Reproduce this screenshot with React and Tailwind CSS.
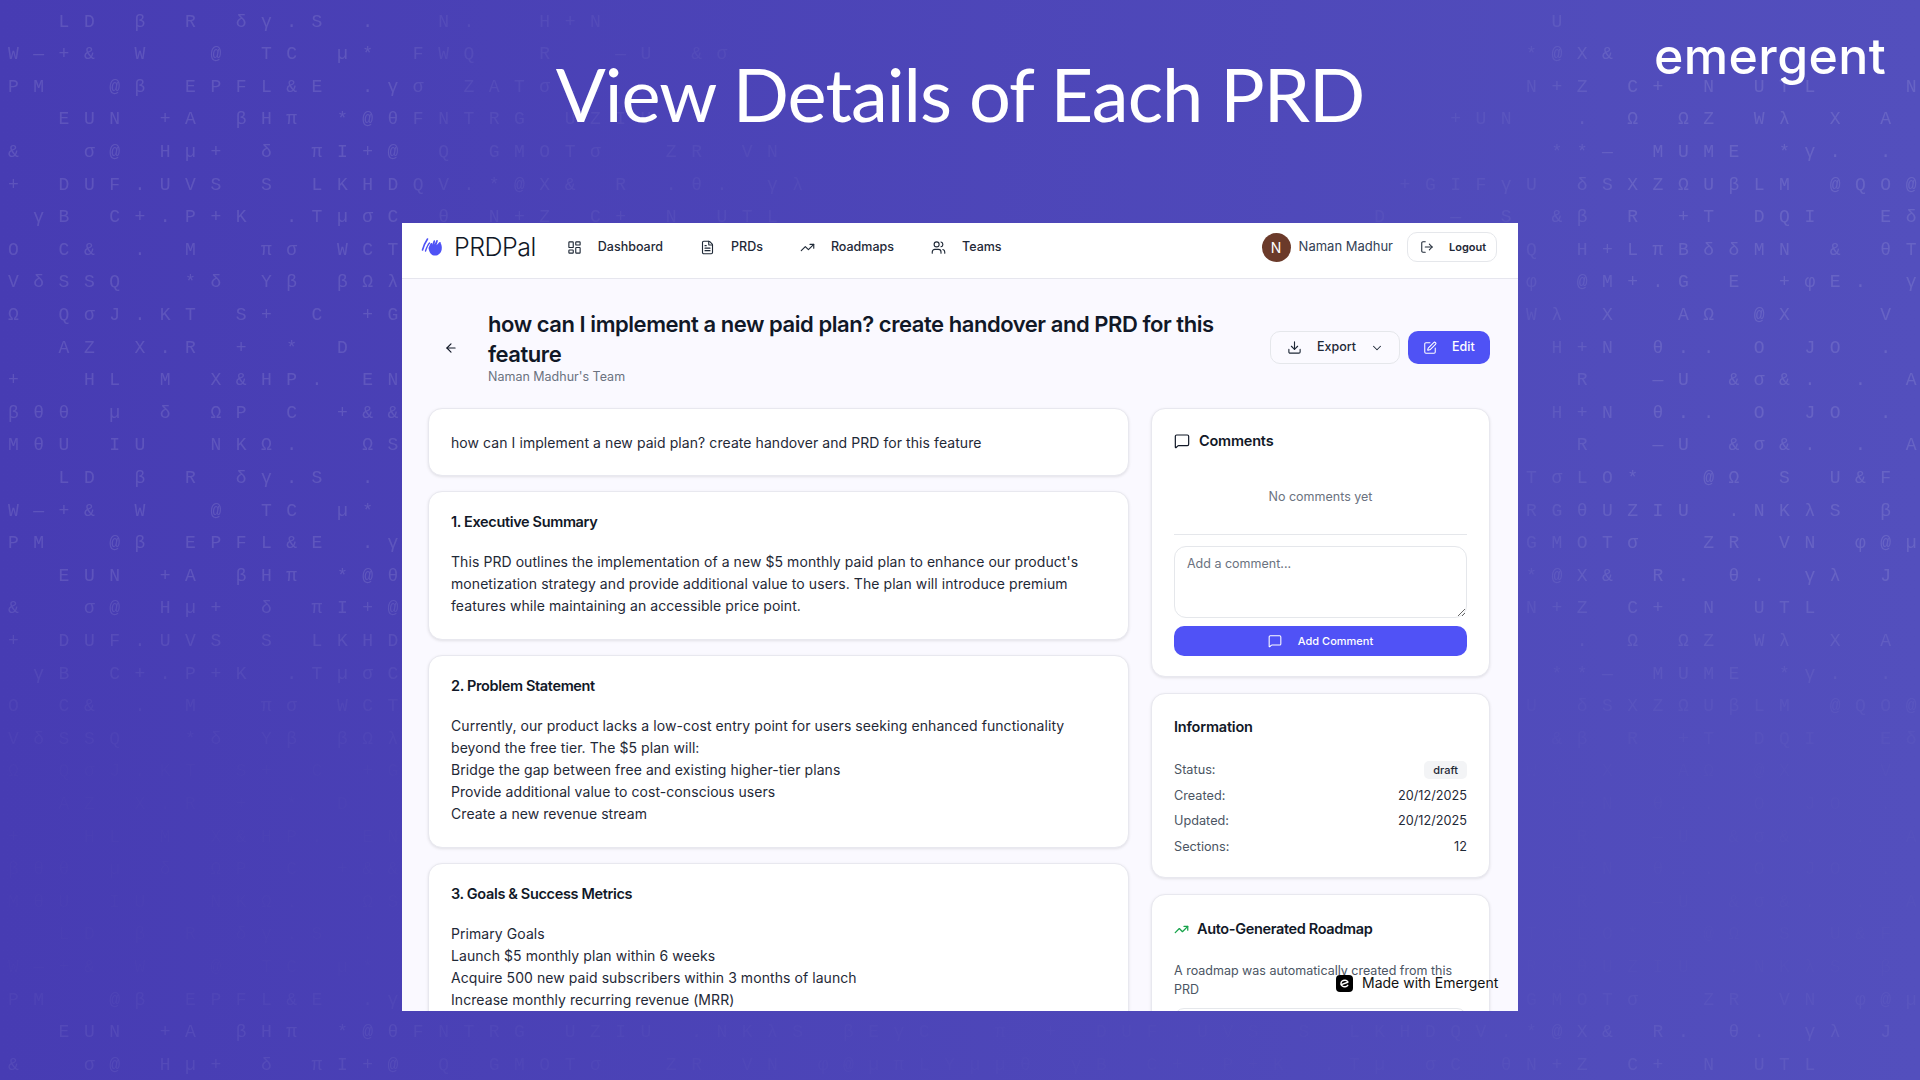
import React from 'react';
import {
  LayoutDashboard,
  FileText,
  TrendingUp,
  Users,
  LogOut,
  ArrowLeft,
  Download,
  ChevronDown,
  SquarePen,
  MessageSquare,
} from 'lucide-react';

// left part of each background row, up to col 60, and the right part from col 60 on
const L = [
  '  LD β R δγ.S .  N.  H+N',
  'W—+& W  @ TC µ* FWQ  R  —U &σ',
  'PM  @β EPFL&E .γσ ZATσLO',
  '  EUN +A βHπ *@θFNTRG UZIU',
  '&  σ@ Hµ+ δ πI+@ Q GMOTσ  ZR VN',
  '+ DUF.UVS S LKHDQV.*@X& R .θ. γλ',
  ' γB C+.P+K .TµσC θ N+Z C+ N UTL',
  'O C& . M  πσ WCT',
  'VδSSQ  *δ Yβ βΩλ',
  'Ω QσJ.KT S+ C +G',
  '  AZ X.R + * D',
  '+  HL M X&HP. ENN',
  'βθθ µ δ ΩP C +&&',
  'MθU IU  NKΩ.  ΩS',
];
const R = [
  ' U',
  '*@X&',
  'N+Z C+ N UTL   N',
  '  . Ω ΩZ Wλ X A',
  ' **— MUME *γ. . .',
  'U δSXZΩUβLM @QO@',
  ' &β R +T DQI  Eδ',
  'Q H+LπBδδMN & θT',
  'φ @M+.G E +φE. γ',
  'Wλ X  AΩ @X   V',
  ' H+N θ.. O JO .',
  '  R  —U &σ&. . A',
  ' H+N θ.. O JO .',
  '  R  —U &σ&. . A',
  'TσLO*  @Ω S U&F',
  'RGθUZIU .NKλS β',
  'GMOTσ  ZR VN φ@µ',
];
const FULL_A = '  EUN +A βHπ *@θFNTRG UZIU .NKλS βEγC  π + DUF.UVS S LKHDQV.';
const FULL_A_R = '*@X& R. θ. γλ J';
const FULL_B = '&  σ@ Hµ+ δ πI+@ Q GMOTσ  ZR VN φ@µπLYµµθ γB C+.P+K .Tµ σC θ';
const FULL_B_R = 'N+Z C+ N UTL';

const pad = (s) => s.padEnd(60, ' ').slice(0, 60);

const buildRows = () => {
  const out = [];
  for (let i = 0; i < 33; i++) {
    let left = L[i % 14];
    let right = R[i < 17 ? i : i >= 19 && i <= 22 ? i - 16 : (i - 14) % 17];
    if (i === 3) {
      left = pad(L[3]).slice(0, 57) + '+UN';
    }
    if (i === 5) {
      left = pad(L[5]).slice(0, 55) + '+GIFγ';
    }
    if (i === 6) {
      left = pad(L[6]).slice(0, 54) + 'D  — S';
    }
    if (i === 17 || i === 31) {
      left = FULL_A;
      right = FULL_A_R;
    }
    if (i === 18 || i === 32) {
      left = FULL_B;
      right = FULL_B_R;
    }
    out.push(pad(left) + right);
  }
  return out;
};

const rowOpacity = (i) => {
  if (i <= 17) return 1;
  if (i >= 31) return 0.55;
  if (i === 30) return 0.3;
  if (i >= 23) return 0.1;
  return [0.85, 0.7, 0.5, 0.35, 0.25][i - 18];
};

const HandLogo = () => (
  <svg viewBox="0 0 22 20" className="h-[20px] w-[23px]">
    <path d="M1 13 C2 9 4 5 6 2" fill="none" stroke="#4f52f5" strokeWidth="1.6" strokeLinecap="round" />
    <path d="M4 14 C5 11 6 8 8 6" fill="none" stroke="#4f52f5" strokeWidth="1.4" strokeLinecap="round" />
    <path
      d="M7 11 L9 6.5 C9.5 5.5 11 6 10.7 7.2 L10.4 8.5 L12 3.8 C12.4 2.8 13.9 3.2 13.6 4.4 L12.9 7.6 L14.8 3.4 C15.3 2.5 16.7 3 16.3 4.2 L15 8.2 L17.8 5.2 C18.6 4.5 19.6 5.3 19.2 6.3 C19.6 6.8 20.8 9.5 20.2 12.5 C19.6 16 17 18.6 13.6 18.6 C10 18.6 8 16.4 7 11 Z"
      fill="#4f52f5"
    />
  </svg>
);

const NavItem = ({ icon: Icon, label }) => (
  <div className="flex items-center gap-4 text-[12.5px] font-medium text-[#1f2937]">
    <Icon className="h-[15px] w-[15px]" strokeWidth={1.8} />
    <span>{label}</span>
  </div>
);

const Card = ({ children, className }) => (
  <div className={`rounded-[14px] border border-[#e8e8ef] bg-white shadow-[0_1px_3px_rgba(0,0,0,0.1)] ${className}`}>
    {children}
  </div>
);

const Section = ({ title, lines, className }) => (
  <Card className={`px-[22px] ${className}`}>
    <h3 className="text-[14.5px] leading-[22px] font-semibold tracking-[-0.35px] text-[#111827]">{title}</h3>
    <div className="mt-[18px] text-[14px] leading-[22px] tracking-[0.07px] text-[#1f2937]">
      {lines.map((line) => (
        <p key={line}>{line}</p>
      ))}
    </div>
  </Card>
);

const InfoRow = ({ label, children }) => (
  <div className="flex h-[25.6px] items-center justify-between text-[12.7px]">
    <span className="text-[#4b5563]">{label}</span>
    {children}
  </div>
);

export default function App() {
  const rows = buildRows();

  return (
    <div className="relative h-screen w-full overflow-hidden bg-gradient-to-r from-[#473cb3] to-[#534fbd] font-['Inter',sans-serif]">
      {/* character matrix behind everything */}
      <div className="absolute left-[8px] top-[5.7px] whitespace-pre font-['Liberation_Mono',monospace] text-[18px] leading-[32.6px] tracking-[14.5px] text-white/[0.12] [mask-image:linear-gradient(90deg,#000_0,#000_380px,rgba(0,0,0,0.5)_430px,rgba(0,0,0,0.3)_800px,rgba(0,0,0,0.15)_1250px,rgba(0,0,0,0.5)_1520px,#000_1620px)]">
        {rows.map((row, i) => (
          <div key={i} style={{ opacity: rowOpacity(i) }}>
            {row}
          </div>
        ))}
      </div>

      {/* emergent wordmark */}
      <div className="absolute left-[1654px] top-[26px] font-['Inter',sans-serif] text-[50px] leading-[60px] font-medium tracking-[0.4px] text-white">
        emergent
      </div>

      <div className="relative flex flex-col items-center">
        <div className="flex h-[223px] w-full justify-center pt-[49px]">
          <h1 className="font-['Lato',sans-serif] text-[74px] leading-[90px] font-normal tracking-[-1px] text-white">
            View Details of Each PRD
          </h1>
        </div>

        <div className="relative h-[788px] w-[1116px] overflow-hidden bg-[#faf9ff]">
          <header className="flex h-[56px] items-center justify-between border-b border-[#e6e6ee] bg-white pb-[7px] pl-[19px] pr-[21px]">
            <div className="flex items-center">
              <HandLogo />
              <span className="ml-[10px] text-[25px] leading-[30px] font-light tracking-[-0.5px] text-[#111827]">PRDPal</span>
              <div className="ml-[31px] flex items-center gap-[37px]">
                <NavItem icon={LayoutDashboard} label="Dashboard" />
                <NavItem icon={FileText} label="PRDs" />
                <NavItem icon={TrendingUp} label="Roadmaps" />
                <NavItem icon={Users} label="Teams" />
              </div>
            </div>
            <div className="flex items-center">
              <div className="flex h-[29px] w-[29px] items-center justify-center rounded-full bg-[#6b3a2a] text-[14px] text-white">
                N
              </div>
              <span className="ml-[8px] text-[13px] text-[#334155]">Naman Madhur</span>
              <button className="ml-[14px] flex h-[30px] w-[90px] items-center gap-[15px] rounded-[10px] border border-[#e5e7eb] bg-white pl-[12px] text-[11px] font-semibold text-[#1f2937]">
                <LogOut className="h-[14px] w-[14px]" strokeWidth={1.8} />
                Logout
              </button>
            </div>
          </header>

          <div className="flex items-center justify-between pl-[42px] pr-[28px] pt-[30px]">
            <div className="flex items-center">
              <ArrowLeft className="h-[14px] w-[14px] text-[#111827]" strokeWidth={2} />
              <div className="ml-[30px] w-[760px]">
                <h2 className="text-[22px] leading-[30px] font-semibold tracking-[-0.45px] text-[#111827]">
                  how can I implement a new paid plan? create handover and PRD for this feature
                </h2>
                <p className="-mt-[1px] text-[12.5px] leading-[18px] text-[#6b7280]">Naman Madhur's Team</p>
              </div>
            </div>
            <div className="flex items-center gap-2">
              <button className="flex h-[33px] w-[130px] items-center rounded-[10px] border border-[#e5e7eb] bg-[#fbfaff] pl-[16px] text-[12.5px] font-medium text-[#1f2937]">
                <Download className="h-[15px] w-[15px]" strokeWidth={1.8} />
                <span className="ml-[15px]">Export</span>
                <ChevronDown className="ml-[14px] h-[14px] w-[14px]" strokeWidth={1.8} />
              </button>
              <button className="flex h-[33px] w-[82px] items-center rounded-[10px] bg-[#4f52f5] pl-[15px] text-[12.5px] font-medium text-white">
                <SquarePen className="h-[14px] w-[14px]" strokeWidth={1.8} />
                <span className="ml-[15px]">Edit</span>
              </button>
            </div>
          </div>

          <div className="mt-[22px] flex gap-[22px] pl-[26px] pr-[28px]">
            <div className="flex w-[701px] shrink-0 flex-col gap-[15px]">
              <Card className="flex h-[68px] items-center px-[22px] text-[14px] tracking-[0.07px] text-[#1f2937]">
                how can I implement a new paid plan? create handover and PRD for this feature
              </Card>
              <Section
                className="h-[149px] pt-[19px]"
                title="1. Executive Summary"
                lines={[
                  "This PRD outlines the implementation of a new $5 monthly paid plan to enhance our product's",
                  'monetization strategy and provide additional value to users. The plan will introduce premium',
                  'features while maintaining an accessible price point.',
                ]}
              />
              <Section
                className="h-[193px] pt-[19px]"
                title="2. Problem Statement"
                lines={[
                  'Currently, our product lacks a low-cost entry point for users seeking enhanced functionality',
                  'beyond the free tier. The $5 plan will:',
                  'Bridge the gap between free and existing higher-tier plans',
                  'Provide additional value to cost-conscious users',
                  'Create a new revenue stream',
                ]}
              />
              <Section
                className="pb-[22px] pt-[19px]"
                title="3. Goals & Success Metrics"
                lines={[
                  'Primary Goals',
                  'Launch $5 monthly plan within 6 weeks',
                  'Acquire 500 new paid subscribers within 3 months of launch',
                  'Increase monthly recurring revenue (MRR)',
                ]}
              />
            </div>

            <div className="flex w-[339px] shrink-0 flex-col gap-4">
              <Card className="h-[269px] px-[22px] pt-[21px]">
                <div className="flex items-center gap-[9px] text-[14.5px] font-semibold tracking-[-0.2px] text-[#111827]">
                  <MessageSquare className="h-[16px] w-[16px]" strokeWidth={1.8} />
                  Comments
                </div>
                <p className="mt-[36px] text-center text-[12.5px] leading-[18px] text-[#6b7280]">No comments yet</p>
                <div className="mt-[28px] border-t border-[#e5e7eb]" />
                <textarea
                  readOnly
                  placeholder="Add a comment..."
                  className="mt-[11px] block h-[72px] w-full rounded-[12px] border border-[#e5e7eb] bg-white px-[12px] py-[8px] text-[12.5px] leading-[18px] outline-none placeholder:text-[#6b7280]"
                />
                <button className="mt-[8px] flex h-[30px] w-full items-center justify-center gap-[16px] rounded-[10px] bg-[#5052f6] text-[11px] font-medium text-white">
                  <MessageSquare className="h-[14px] w-[14px]" strokeWidth={1.8} />
                  Add Comment
                </button>
              </Card>

              <Card className="h-[185px] px-[22px] pt-[22px]">
                <h3 className="text-[14.5px] leading-[22px] font-semibold tracking-[-0.2px] text-[#111827]">Information</h3>
                <div className="mt-[19px] text-[#1f2937]">
                  <InfoRow label="Status:">
                    <span className="rounded-[5px] bg-[#f3f4f6] px-[9px] py-[1px] text-[11px] font-medium">draft</span>
                  </InfoRow>
                  <InfoRow label="Created:">
                    <span>20/12/2025</span>
                  </InfoRow>
                  <InfoRow label="Updated:">
                    <span>20/12/2025</span>
                  </InfoRow>
                  <InfoRow label="Sections:">
                    <span>12</span>
                  </InfoRow>
                </div>
              </Card>

              <Card className="px-[22px] pb-[20px] pt-[23px]">
                <div className="flex items-center gap-[8px] text-[14.5px] leading-[22px] font-semibold tracking-[-0.35px] text-[#111827]">
                  <TrendingUp className="h-[15px] w-[15px] text-[#16a34a]" strokeWidth={2} />
                  Auto-Generated Roadmap
                </div>
                <p className="mt-[21px] text-[12.5px] leading-[19px] text-[#4b5563]">
                  A roadmap was automatically created from this PRD
                </p>
                <div className="mt-[9px] h-[60px] rounded-[10px] border border-[#e5e7eb]" />
              </Card>
            </div>
          </div>

          {/* made with badge sits on top of the page */}
          <div className="absolute left-[934px] top-[751px] flex items-center gap-[9px] text-[14px] leading-[18px] text-[#111111]">
            <span className="flex h-[17px] w-[17px] items-center justify-center rounded-[4px] bg-black">
              <svg viewBox="0 0 12 12" className="h-[11px] w-[11px]" fill="none" stroke="white" strokeWidth="1.6" strokeLinecap="round">
                <path d="M9.5 4 A4 3.6 0 1 0 9.5 8" />
                <path d="M2.5 7.2 L9.6 4.6" />
              </svg>
            </span>
            Made with Emergent
          </div>
        </div>
      </div>
    </div>
  );
}
